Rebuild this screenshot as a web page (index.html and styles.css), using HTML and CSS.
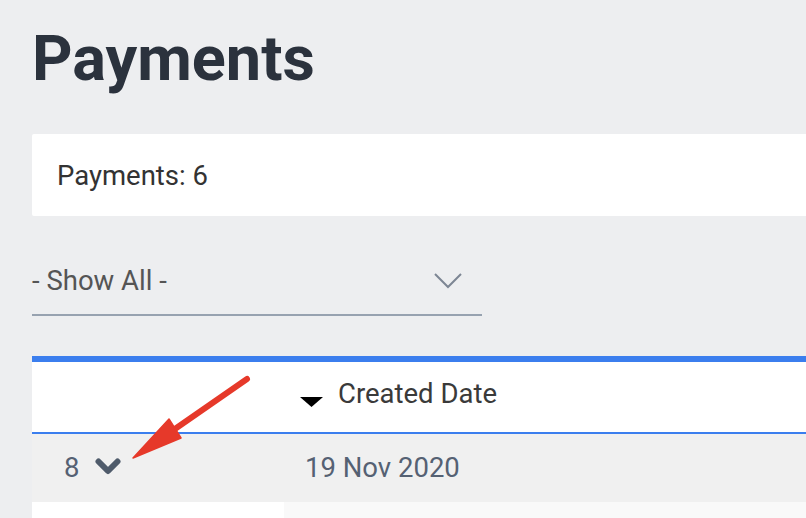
FILE: index.html
```html
<!DOCTYPE html>
<html lang="en">
<head>
<meta charset="utf-8">
<title>Payments</title>
<link rel="stylesheet" href="styles.css">
</head>
<body>
<div class="page">
  <h1 class="title">Payments</h1>
  <div class="summary-card">Payments: 6</div>
  <div class="select">
    <span class="select-label">- Show All -</span>
    <svg class="select-chevron" width="28" height="16" viewBox="0 0 28 16"><polyline points="1,1 14,14 27,1" fill="none" stroke="#7d8694" stroke-width="2"/></svg>
  </div>
  <div class="table">
    <div class="table-head">
      <div class="cell cell-first"></div>
      <div class="cell cell-date head-date">
        <svg class="sort-icon" width="23" height="10" viewBox="0 0 23 10"><polygon points="0,0 23,0 11.5,10" fill="#000"/></svg>
        <span>Created Date</span>
      </div>
    </div>
    <div class="table-row">
      <div class="cell cell-first row-id">
        <span>8</span>
        <svg class="row-chevron" width="26" height="17" viewBox="0 0 26 17"><polyline points="3.5,3.5 13,13 22.5,3.5" fill="none" stroke="#4f5b6b" stroke-width="6" stroke-linecap="round" stroke-linejoin="round"/></svg>
      </div>
      <div class="cell cell-date row-date">19 Nov 2020</div>
    </div>
    <div class="table-row next-row">
      <div class="cell cell-first"></div>
      <div class="cell cell-date"></div>
    </div>
  </div>
  <svg class="annotation" width="806" height="518" viewBox="0 0 806 518">
    <line x1="247" y1="379" x2="172" y2="431" stroke="#e6392a" stroke-width="6" stroke-linecap="round"/>
    <polygon points="133,458 169,419 181,438" fill="#e6392a" stroke="#e6392a" stroke-width="1.5" stroke-linejoin="round"/>
  </svg>
</div>
</body>
</html>
```
FILE: styles.css
```css
html, body {
  margin: 0;
  padding: 0;
}
body {
  background: #edeef0;
  font-family: Roboto, "Liberation Sans", sans-serif;
  overflow: hidden;
  width: 806px;
  height: 518px;
}
.page {
  position: relative;
  padding-left: 32px;
  height: 518px;
  overflow: hidden;
}
.title {
  margin: 0;
  padding-top: 22px;
  font-size: 63px;
  line-height: 74px;
  font-weight: 700;
  color: #2b323d;
}
.summary-card {
  margin-top: 38px;
  height: 82px;
  display: flex;
  align-items: center;
  padding-left: 25px;
  background: #ffffff;
  border-radius: 2px 0 0 2px;
  font-size: 27.5px;
  color: #333333;
}
.select {
  margin-top: 34px;
  width: 430px;
  padding: 15px 20px 17px 0;
  display: flex;
  align-items: center;
  justify-content: space-between;
  border-bottom: 2px solid #97a2b0;
  font-size: 27.5px;
  line-height: 32px;
  color: #555555;
}
.select-chevron {
  display: block;
}
.table {
  margin-top: 40px;
  border-top: 6px solid #3b7eee;
}
.table-head {
  display: grid;
  grid-template-columns: 252px 1fr;
  height: 70px;
  background: #ffffff;
  border-bottom: 2px solid #3b7eee;
}
.table-row {
  display: grid;
  grid-template-columns: 252px 1fr;
  height: 68px;
  background: #f0f0f0;
}
.cell {
  display: flex;
  align-items: center;
  font-size: 27.5px;
  line-height: 32px;
}
.head-date {
  padding-left: 16px;
  padding-bottom: 6px;
  color: #3a3a3a;
}
.sort-icon {
  display: block;
  margin-top: 16px;
  margin-right: 15px;
}
.row-id {
  padding-left: 32px;
  color: #556173;
}
.row-chevron {
  display: block;
  margin-left: 16px;
  margin-bottom: 4px;
}
.row-date {
  padding-left: 21px;
  color: #556173;
}
.next-row {
  height: 30px;
  background: #f9f9f9;
}
.next-row .cell-first {
  background: #ffffff;
}
.annotation {
  position: absolute;
  left: 0;
  top: 0;
  pointer-events: none;
}
```
